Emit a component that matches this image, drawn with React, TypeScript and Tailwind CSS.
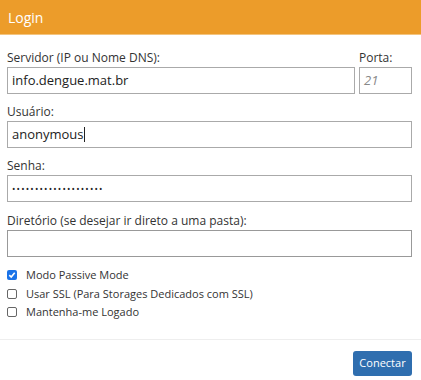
import React from "react";

export default function App() {
  const font = { fontFamily: '"Open Sans", "Noto Sans", sans-serif' };
  return (
    <div className="w-[421px] h-[380px] bg-white text-[#333]" style={font}>
      <div className="h-[35px] bg-[#ec9c2a] border-b border-[#f3c47f] flex items-center pl-2 text-white text-[14px]">
        Login
      </div>
      <div className="pl-[7px] pr-[9px] pt-[14px]">
        <div className="flex gap-[4px]">
          <div className="flex-1 flex flex-col">
            <label className="text-[12px] leading-[18px] text-[#333]">Servidor (IP ou Nome DNS):</label>
            <div className="h-[27px] border border-[#aaa] flex items-center px-[4px] text-[13px] text-[#222]">info.dengue.mat.br</div>
          </div>
          <div className="w-[53px] flex flex-col">
            <label className="text-[12px] leading-[18px] text-[#333]">Porta:</label>
            <div className="h-[27px] border border-[#aaa] flex items-center px-[4px] text-[13px] italic text-[#888]">21</div>
          </div>
        </div>
        <div className="flex flex-col mt-[9px]">
          <label className="text-[12px] leading-[18px] text-[#333]">Usuário:</label>
          <div className="h-[27px] border border-[#aaa] flex items-center px-[4px] text-[13px] text-[#222]">
            anonymous<span className="w-px h-[15px] bg-[#222]" />
          </div>
        </div>
        <div className="flex flex-col mt-[9px]">
          <label className="text-[12px] leading-[18px] text-[#333]">Senha:</label>
          <div className="h-[27px] border border-[#aaa] flex items-center px-[4px] text-[9px] tracking-[1.2px] text-[#222]">
            ••••••••••••••••••••
          </div>
        </div>
        <div className="flex flex-col mt-[10px]">
          <label className="text-[12px] leading-[18px] text-[#333]">Diretório (se desejar ir direto a uma pasta):</label>
          <div className="h-[27px] border border-[#999]" />
        </div>
        <div className="mt-[9px] flex flex-col text-[11px] text-[#333]">
          <div className="flex items-center gap-[9px] h-[18.5px]">
            <span className="w-[10px] h-[10px] rounded-[2px] bg-[#1a73e8] flex items-center justify-center">
              <svg width="8" height="8" viewBox="0 0 8 8"><path d="M1.3 4.2 L3.2 6 L6.7 1.8" stroke="white" strokeWidth="1.6" fill="none" /></svg>
            </span>
            Modo Passive Mode
          </div>
          <div className="flex items-center gap-[9px] h-[18.5px]">
            <span className="w-[10px] h-[10px] rounded-[2px] border border-[#666]" />
            Usar SSL (Para Storages Dedicados com SSL)
          </div>
          <div className="flex items-center gap-[9px] h-[18.5px]">
            <span className="w-[10px] h-[10px] rounded-[2px] border border-[#666]" />
            Mantenha-me Logado
          </div>
        </div>
      </div>
      <div className="mt-[17px] border-t border-[#eee] flex justify-end pr-[9px] pt-[11px]">
        <button className="h-[25px] w-[59px] rounded-[3px] bg-[#2f6eaf] text-white text-[11px]">Conectar</button>
      </div>
    </div>
  );
}
